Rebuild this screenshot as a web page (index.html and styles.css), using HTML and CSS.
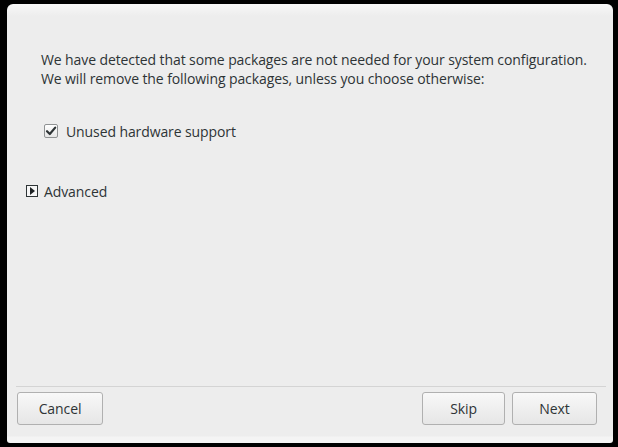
FILE: index.html
```html
<!DOCTYPE html>
<html>
<head>
<meta charset="utf-8">
<link rel="stylesheet" href="styles.css">
</head>
<body>
<div class="dialog">
  <div class="content">
    <p class="intro">We have detected that some packages are not needed for your system configuration.<br>We will remove the following packages, unless you choose otherwise:</p>
    <label class="check-row">
      <span class="checkbox">
        <svg width="12" height="12" viewBox="0 0 12 12"><path d="M2 6.2 L4.8 9 L10.2 2.6" fill="none" stroke="#2e3436" stroke-width="2.2" stroke-linecap="round" stroke-linejoin="round"/></svg>
      </span>
      <span>Unused hardware support</span>
    </label>
    <div class="expander">
      <span class="arrow-box"><span class="arrow"></span></span>
      <span>Advanced</span>
    </div>
  </div>
  <div class="footer">
    <button class="btn btn-cancel">Cancel</button>
    <div class="spacer"></div>
    <button class="btn btn-skip">Skip</button>
    <button class="btn btn-next">Next</button>
  </div>
</div>
</body>
</html>
```
FILE: styles.css
```css
html, body {
  margin: 0;
  padding: 0;
  background: #000;
  width: 618px;
  height: 447px;
  overflow: hidden;
}
.dialog {
  margin: 4px 5px 0 7px;
  width: 606px;
  height: 439px;
  box-sizing: border-box;
  border-radius: 6px 6px 3px 3px;
  background: linear-gradient(#f8f8f8 0, #ededed 12px, #ededed 432px, #f4f4f4 433px);
  display: flex;
  flex-direction: column;
  font-family: "Open Sans", "DejaVu Sans", sans-serif;
  font-size: 14px;
  letter-spacing: -0.1px;
  color: #2e3436;
}
.content {
  flex: 1;
  padding: 46px 0 0 19px;
}
.intro {
  margin: 0 0 0 15px;
  line-height: 19px;
}
.check-row {
  display: flex;
  align-items: center;
  margin: 33px 0 0 18px;
  height: 20px;
}
.checkbox {
  width: 14px;
  height: 14px;
  box-sizing: border-box;
  border: 1px solid #8f9293;
  border-radius: 2px;
  background: linear-gradient(#ffffff, #e6e6e6);
  display: flex;
  align-items: center;
  justify-content: center;
  margin-right: 8px;
}
.expander {
  display: flex;
  align-items: center;
  margin-top: 40px;
  height: 20px;
}
.arrow-box {
  width: 12px;
  height: 12px;
  box-sizing: border-box;
  border: 1px solid #2e3436;
  background: #f6f6f6;
  display: flex;
  align-items: center;
  justify-content: center;
  margin-right: 6px;
}
.arrow {
  width: 0;
  height: 0;
  border-top: 4px solid transparent;
  border-bottom: 4px solid transparent;
  border-left: 5px solid #1e2224;
  margin-left: 1px;
}
.footer {
  display: flex;
  margin: 0 7px 18px 9px;
  padding: 5px 9px 0 1px;
  border-top: 1px solid #d4d4d4;
  gap: 7px;
}
.spacer { flex: 1; }
.btn {
  height: 33px;
  box-sizing: border-box;
  border: 1px solid #b0b0b0;
  border-radius: 3px;
  background: linear-gradient(#f8f8f8, #e6e6e6);
  font-family: inherit;
  font-size: 14px;
  letter-spacing: -0.1px;
  color: #2e3436;
  padding: 0;
}
.btn-cancel { width: 86px; }
.btn-skip { width: 83px; }
.btn-next { width: 85px; }
```
